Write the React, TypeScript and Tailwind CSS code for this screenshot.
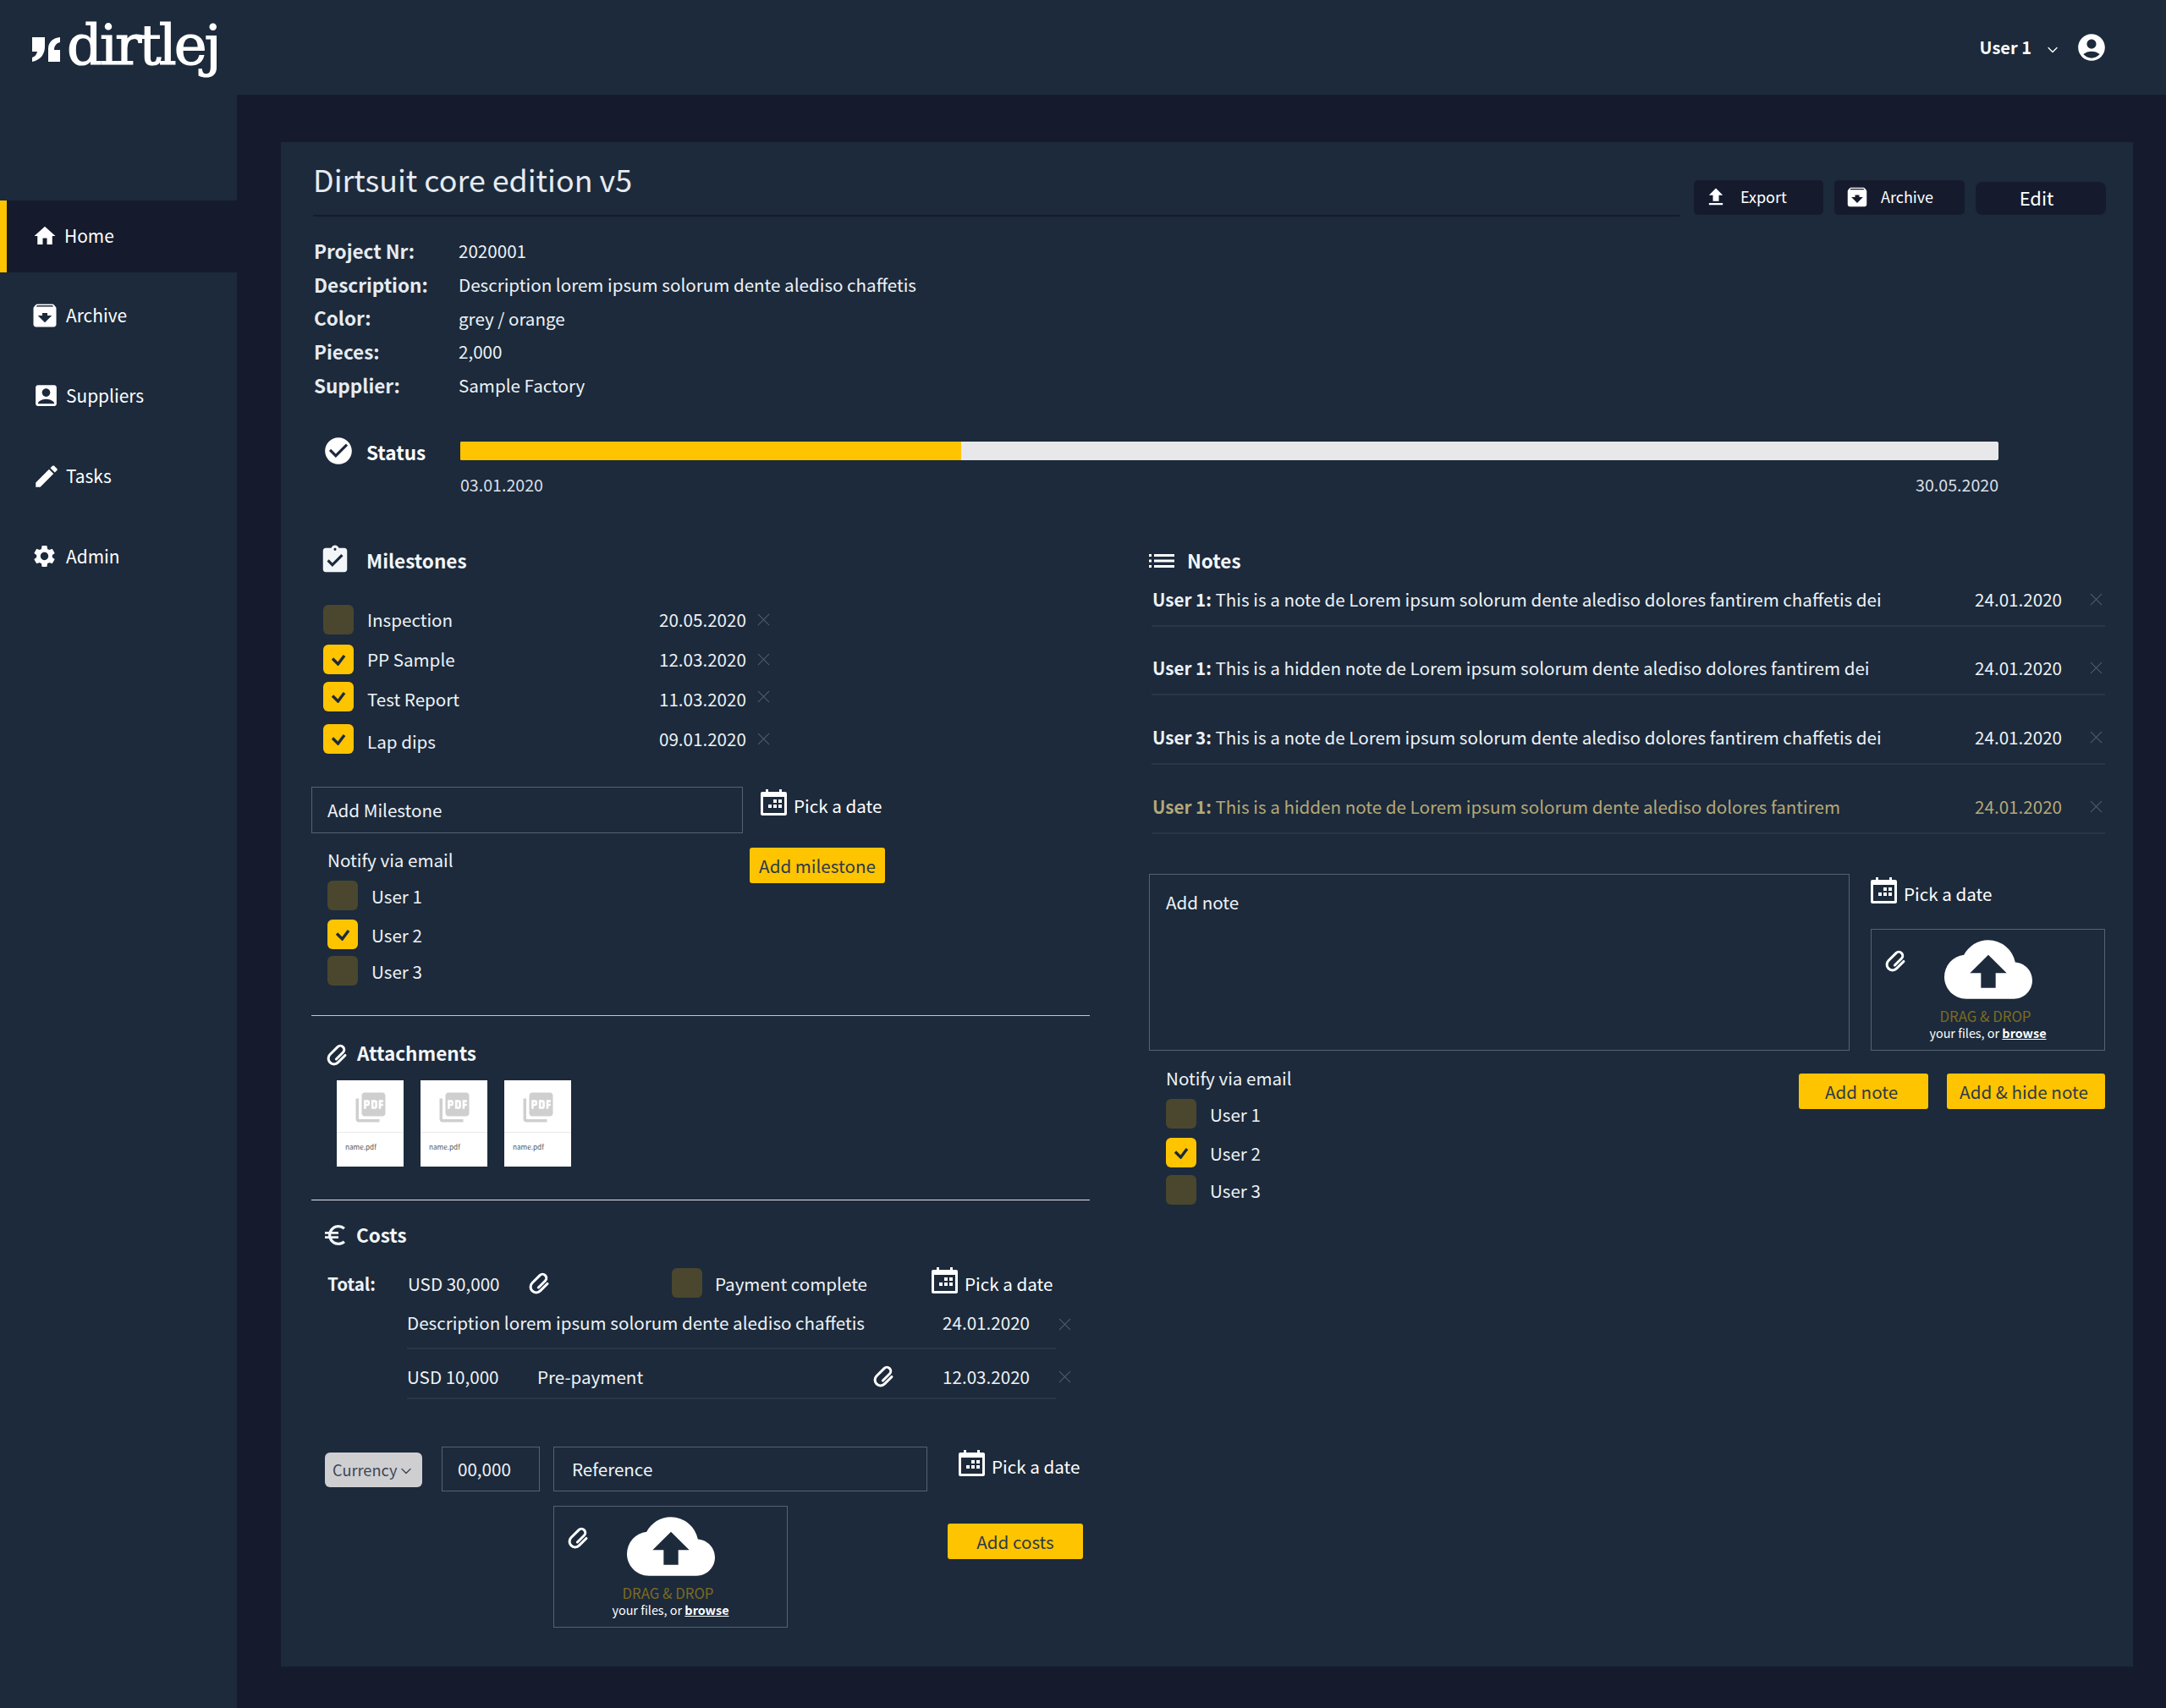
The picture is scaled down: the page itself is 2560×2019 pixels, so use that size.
import type { ReactNode } from "react";
import {
  MdAccountBox,
  MdAccountCircle,
  MdArchive,
  MdAssignmentTurnedIn,
  MdCheckCircle,
  MdCloudUpload,
  MdEdit,
  MdEuroSymbol,
  MdFileUpload,
  MdHome,
  MdPictureAsPdf,
  MdSettings,
} from "react-icons/md";
import { ChevronDown, X } from "lucide-react";

function Clip({ size = 32 }: { size?: number }) {
  return (
    <svg width={size} height={size} viewBox="0 0 24 24" className="shrink-0">
      <path
        d="M17 7.5v9a5 5 0 0 1-10 0V7a3.4 3.4 0 0 1 6.8 0v8.5"
        fill="none"
        stroke="#fff"
        strokeWidth="2.3"
        strokeLinecap="round"
        transform="rotate(45 12 12)"
      />
    </svg>
  );
}

function CalendarIcon() {
  return (
    <svg width="31" height="31" viewBox="0 0 31 31" className="shrink-0">
      <path fill="#fff" d="M6 0h3v3h13V0h3v3h4a2 2 0 0 1 2 2v24a2 2 0 0 1-2 2H2a2 2 0 0 1-2-2V5a2 2 0 0 1 2-2h4z" />
      <rect x="3" y="9" width="25" height="19" fill="#1c2a3b" />
      <path fill="#fff" d="M15 12h4v4h-4zM21 12h4v4h-4zM9 18h4v4H9zM15 18h4v4h-4zM21 18h4v4h-4z" />
    </svg>
  );
}

function PickDate({ className = "" }: { className?: string }) {
  return (
    <div className={`flex items-start gap-2 h-[31px] text-[20.6px] leading-[31px] text-white ${className}`}>
      <CalendarIcon />
      <span className="pt-[4px] whitespace-nowrap">Pick a date</span>
    </div>
  );
}

function Checkbox({ on = false }: { on?: boolean }) {
  return (
    <span
      className={`w-[36px] h-[35px] rounded-[6px] flex items-center justify-center shrink-0 ${
        on ? "bg-[#ffc400]" : "bg-[#4a472e]"
      }`}
    >
      {on && (
        <svg width="18" height="14" viewBox="0 0 18 14">
          <path d="M2 5.5l6.5 6.5L16 2" fill="none" stroke="#1c2a3b" strokeWidth="3.4" />
        </svg>
      )}
    </span>
  );
}

function Close() {
  return <X size={25} strokeWidth={1} className="text-[#5a6574] shrink-0" />;
}

function Heading({ icon, children, className = "" }: { icon: ReactNode; children: ReactNode; className?: string }) {
  return (
    <div className={`flex items-center text-[22.5px] font-semibold leading-[40px] text-[#f3f6f9] ${className}`}>
      {icon}
      {children}
    </div>
  );
}

function Dropzone({ className = "" }: { className?: string }) {
  return (
    <div className={`w-[277px] h-[144px] border border-[#566272] relative flex flex-col items-center ${className}`}>
      <span className="absolute left-[13px] top-[21px]">
        <Clip />
      </span>
      <MdCloudUpload size={104} className="text-white -mt-[5px] -mb-[8px] shrink-0" />
      <span className="text-[16.8px] leading-[22px] text-[#7c6a22] -ml-[6px]">DRAG &amp; DROP</span>
      <span className="text-[14.4px] leading-[18px] text-white">
        your files, or <b className="underline">browse</b>
      </span>
    </div>
  );
}

function NotifyList({ gaps }: { gaps: string[] }) {
  return (
    <div>
      {["User 1", "User 2", "User 3"].map((u, i) => (
        <div key={u} className={`flex items-center h-[35px] text-[20.6px] leading-[26px] text-[#eef2f6] ${gaps[i]}`}>
          <Checkbox on={i === 1} />
          <span className="ml-[16px] pt-[1px]">{u}</span>
        </div>
      ))}
    </div>
  );
}

const nav = [
  { label: "Home", icon: <MdHome size={30} />, active: true },
  { label: "Archive", icon: <MdArchive size={36} className="-ml-[3px] -mr-[2px]" /> },
  { label: "Suppliers", icon: <MdAccountBox size={33} /> },
  { label: "Tasks", icon: <MdEdit size={34} /> },
  { label: "Admin", icon: <MdSettings size={31} className="ml-[-1px]" /> },
];

const info = [
  ["Project Nr:", "2020001"],
  ["Description:", "Description lorem ipsum solorum dente alediso chaffetis"],
  ["Color:", "grey / orange"],
  ["Pieces:", "2,000"],
  ["Supplier:", "Sample Factory"],
];

const milestones = [
  { label: "Inspection", date: "20.05.2020", on: false, cls: "" },
  { label: "PP Sample", date: "12.03.2020", on: true, cls: "mt-[12px]" },
  { label: "Test Report", date: "11.03.2020", on: true, cls: "mt-[9px]" },
  { label: "Lap dips", date: "09.01.2020", on: true, cls: "mt-[15px]" },
];

const notes = [
  { user: "User 1:", text: "This is a note de Lorem ipsum solorum dente alediso dolores fantirem chaffetis dei", cls: "h-[56px]" },
  { user: "User 1:", text: "This is a hidden note de Lorem ipsum solorum dente alediso dolores fantirem dei", cls: "h-[81px]" },
  { user: "User 3:", text: "This is a note de Lorem ipsum solorum dente alediso dolores fantirem chaffetis dei", cls: "h-[82px]" },
  { user: "User 1:", text: "This is a hidden note de Lorem ipsum solorum dente alediso dolores fantirem", cls: "h-[82px] text-[#b5a878]" },
];

export default function App() {
  return (
    <div className="w-[2560px] h-[2019px] flex flex-col bg-[#151b2d] text-[#eef2f6] font-['Noto_Sans_CJK_SC','Noto_Sans',sans-serif]">
      {/* Header */}
      <header className="h-[112px] shrink-0 bg-[#1c2a3b] flex items-start justify-between pr-[69px]">
        <div className="flex items-start pl-[38px] text-white">
          <svg width="34" height="30" viewBox="0 0 34 30" className="mt-[44px]">
            <path fill="#fff" d="M0 0h15v11c0 9-5 16-15 18v-5c3-1 5-3 6-7H0zM33 0c-8 1-14 5-14 14v15h14V15h-7c0-4 2-8 7-9z" />
          </svg>
          <span className="ml-[7px] mt-[13px] font-['DejaVu_Serif',serif] text-[65.6px] leading-[80px] tracking-[-3px] [-webkit-text-stroke:1.2px_white]">
            dirtlej
          </span>
        </div>
        <div className="flex items-center h-[112px] text-white">
          <span className="text-[20px] font-semibold">User 1</span>
          <ChevronDown size={20} strokeWidth={1.6} className="ml-[15px] mt-[6px]" />
          <MdAccountCircle size={38} className="ml-[17px]" />
        </div>
      </header>

      <div className="flex flex-1">
        {/* Sidebar */}
        <aside className="w-[280px] shrink-0 bg-[#1c2a3b] pt-[125px]">
          {nav.map((n) => (
            <div
              key={n.label}
              className={`flex items-center text-[20.9px] text-white ${
                n.active ? "h-[85px] bg-[#151b2d] border-l-[8px] border-[#ffc400] pl-[30px] pb-[1px]" : "h-[95px] pl-[38px] pt-[6px]"
              }`}
            >
              <span className={`flex justify-start ${n.active ? "w-[38px]" : "w-[40px]"}`}>{n.icon}</span>
              <span>{n.label}</span>
            </div>
          ))}
        </aside>

        {/* Card */}
        <main className="flex-1 pl-[52px] pr-[40px] pt-[56px]">
          <div className="h-[1802px] bg-[#1c2a3b]">
            <div className="flex items-end pl-[38px] pr-[32px] h-[88px]">
              <div className="w-[1615px] h-[88px] border-b-2 border-[#151b2d] text-[35.8px] leading-[56px] pt-[15px] text-[#e6ebf1]">
                Dirtsuit core edition v5
              </div>
              <div className="flex items-end gap-[13px] ml-[17px] mb-[2px]">
                <button className="w-[153px] h-[41px] rounded-[5px] bg-[#151b2d] text-[18px] text-white flex items-center pl-[12px] pb-[2px]">
                  <MdFileUpload size={28} />
                  <span className="ml-[15px]">Export</span>
                </button>
                <button className="w-[154px] h-[41px] rounded-[5px] bg-[#151b2d] text-[18px] text-white flex items-center pl-[12px] pb-[2px]">
                  <MdArchive size={30} />
                  <span className="ml-[13px]">Archive</span>
                </button>
                <button className="w-[154px] h-[39px] rounded-[8px] bg-[#151b2d] text-[22px] leading-[26px] text-white pr-[10px] pb-[4px]">Edit</button>
              </div>
            </div>

            <div className="pl-[39px] pt-[21px]">
              {info.map(([k, v]) => (
                <div key={k} className="flex items-center h-[39.7px]">
                  <span className="w-[171px] text-[22.5px] font-semibold text-[#e6ebf1]">{k}</span>
                  <span className="text-[20.6px] text-[#eef2f6]">{v}</span>
                </div>
              ))}
            </div>

            {/* Status */}
            <div className="flex mt-[47px] pl-[52px]">
              <div className="w-[160px] flex items-center h-[22px] text-[22.5px] font-semibold text-white">
                <MdCheckCircle size={38} className="shrink-0 -ml-[3px]" />
                <span className="ml-[14px] pt-[3px]">Status</span>
              </div>
              <div className="w-[1818px]">
                <div className="h-[22px] bg-[#e8e8ea] rounded-[2px]">
                  <div className="h-full w-[592px] bg-[#ffc400] rounded-l-[2px]" />
                </div>
                <div className="flex justify-between text-[19.6px] leading-[30px] mt-[14px] text-[#d9dfe6]">
                  <span>03.01.2020</span>
                  <span>30.05.2020</span>
                </div>
              </div>
            </div>

            <div className="flex pl-[36px] gap-[70px] mt-[51px]">
              {/* Left column */}
              <div className="w-[920px]">
                <Heading className="h-[46px] pl-[9px]" icon={<MdAssignmentTurnedIn size={38} className="mr-[18px]" />}>
                  Milestones
                </Heading>

                <div className="mt-[30px] pl-[14px]">
                  {milestones.map((m, i) => (
                    <div key={m.label} className={`flex items-center h-[35px] text-[20.6px] leading-[26px] ${m.cls}`}>
                      <Checkbox on={m.on} />
                      <span className={`ml-[16px] w-[345px] ${i > 1 ? "pt-[4px]" : "pb-[2px]"}`}>{m.label}</span>
                      <span className={`w-[100px] text-right whitespace-nowrap ${i === 2 ? "pt-[4px]" : "pb-[2px]"}`}>{m.date}</span>
                      <span className="ml-[11px] flex">
                        <Close />
                      </span>
                    </div>
                  ))}
                </div>

                <div className="flex mt-[39px]">
                  <div className="w-[510px] h-[55px] border border-[#566272] flex items-center pl-[18px] text-[20.6px]">Add Milestone</div>
                  <PickDate className="ml-[21px] mt-[3px]" />
                </div>

                <div className="flex">
                  <div className="w-[518px] pl-[19px] pt-[10px]">
                    <div className="h-[42px] text-[20.6px] leading-[42px]">Notify via email</div>
                    <NotifyList gaps={["mt-[4px]", "mt-[11px]", "mt-[8px]"]} />
                  </div>
                  <button className="w-[160px] h-[42px] mt-[17px] rounded-[3px] bg-[#ffc400] text-[20.6px] text-[#2e3a4a]">Add milestone</button>
                </div>

                <div className="h-px bg-[#c3c9d1] mt-[35px]" />

                <Heading className="mt-[23px] pl-[15px]" icon={<span className="mr-[7px] mt-[5px] flex"><Clip /></span>}>
                  Attachments
                </Heading>

                <div className="flex gap-[20px] mt-[13px] ml-[30px]">
                  {[0, 1, 2].map((t) => (
                    <div key={t} className="w-[79px] h-[102px] bg-white">
                      <div className="h-[62px] border-b border-[#e9e9e9] flex items-center justify-center pt-[3px]">
                        <MdPictureAsPdf size={42} className="text-[#cfcfcf]" />
                      </div>
                      <div className="pl-[10px] pt-[7px] text-[8.2px] leading-[18px] text-[#555]">name.pdf</div>
                    </div>
                  ))}
                </div>

                <div className="h-px bg-[#dfe3e8] mt-[39px]" />

                <Heading className="mt-[20px] pl-[12px]" icon={<MdEuroSymbol size={32} className="mr-[9px] mt-[2px]" />}>
                  Costs
                </Heading>

                <div className="flex items-center h-[37px] mt-[19px] pl-[19px] text-[20.6px] leading-[26px]">
                  <span className="w-[95px] font-semibold">Total:</span>
                  <span className="w-[140px]">USD 30,000</span>
                  <span className="w-[172px] flex"><Clip /></span>
                  <Checkbox />
                  <span className="ml-[15px] w-[256px]">Payment complete</span>
                  <PickDate className="self-start" />
                </div>

                <div className="flex ml-[113px] text-[20.6px] leading-[26px]">
                  <div className="w-[767px] h-[60px] border-b-2 border-[#27374a] flex items-center pb-[3px]">
                    <span className="flex-1 whitespace-nowrap">Description lorem ipsum solorum dente alediso chaffetis</span>
                    <span className="mr-[31px]">24.01.2020</span>
                  </div>
                  <span className="h-[60px] flex items-center -ml-[2px]"><Close /></span>
                </div>
                <div className="flex ml-[113px] text-[20.6px] leading-[26px]">
                  <div className="w-[767px] h-[59px] border-b-2 border-[#27374a] flex items-center pt-[6px]">
                    <span className="w-[154px]">USD 10,000</span>
                    <span className="flex-1">Pre-payment</span>
                    <span className="flex"><Clip /></span>
                    <span className="ml-[53px] mr-[31px]">12.03.2020</span>
                  </div>
                  <span className="h-[59px] flex items-center pt-[6px] -ml-[2px]"><Close /></span>
                </div>

                <div className="flex mt-[56px]">
                  <div className="w-[115px] h-[41px] mt-[7px] ml-[16px] rounded-[6px] bg-[#cfcfd2] text-[#3d4754] text-[18.2px] flex items-center pl-[9px]">
                    Currency
                    <ChevronDown size={20} strokeWidth={1.6} className="ml-[1px] mt-[3px]" />
                  </div>
                  <div className="w-[116px] h-[53px] ml-[23px] border border-[#566272] flex items-center pl-[18px] text-[20.6px]">00,000</div>
                  <div className="w-[442px] h-[53px] ml-[16px] border border-[#566272] flex items-center pl-[21px] text-[20.6px]">Reference</div>
                  <PickDate className="ml-[37px] mt-[4px]" />
                </div>

                <div className="flex mt-[17px]">
                  <Dropzone className="ml-[286px]" />
                  <button className="w-[160px] h-[42px] mt-[21px] ml-[189px] rounded-[3px] bg-[#ffc400] text-[20.6px] text-[#2e3a4a]">Add costs</button>
                </div>
              </div>

              {/* Right column */}
              <div className="w-[1130px]">
                <Heading
                  className="h-[46px]"
                  icon={
                    <svg width="30" height="16" viewBox="0 0 30 16" className="mr-[15px] mt-[2px]">
                      <path fill="#fff" d="M0 0h3v3H0zM6 0h24v3H6zM0 6.5h3v3H0zM6 6.5h24v3H6zM0 13h3v3H0zM6 13h24v3H6z" />
                    </svg>
                  }
                >
                  Notes
                </Heading>

                <div className="ml-[3px]">
                  {notes.map((n, i) => (
                    <div key={i} className={`flex items-end pb-[17px] pl-[1px] border-b-2 border-[#27374a] ${n.cls}`}>
                      <div className="flex items-center w-full h-[28px] text-[20.6px] leading-[28px]">
                        <span className="flex-1 whitespace-nowrap">
                          <b className="font-semibold">{n.user}</b> {n.text}
                        </span>
                        <span className="mr-[28px]">24.01.2020</span>
                        <span className="flex -mr-[2px]"><Close /></span>
                      </div>
                    </div>
                  ))}
                </div>

                <div className="flex mt-[47px]">
                  <div className="w-[828px] h-[209px] border border-[#566272] pl-[19px] pt-[17px] text-[20.6px] leading-[30px]">Add note</div>
                  <div className="ml-[25px]">
                    <PickDate className="mt-[4px]" />
                    <Dropzone className="mt-[30px]" />
                  </div>
                </div>

                <div className="flex justify-between">
                  <div className="pl-[20px] pt-[12px]">
                    <div className="h-[40px] text-[20.6px] leading-[40px]">Notify via email</div>
                    <NotifyList gaps={["mt-[5px]", "mt-[11px]", "mt-[9px]"]} />
                  </div>
                  <div className="flex gap-[22px] mt-[27px]">
                    <button className="w-[153px] h-[42px] rounded-[3px] bg-[#ffc400] text-[20.6px] text-[#2e3a4a] pr-[5px]">Add note</button>
                    <button className="w-[187px] h-[42px] rounded-[3px] bg-[#ffc400] text-[20.6px] text-[#2e3a4a] pr-[5px]">Add &amp; hide note</button>
                  </div>
                </div>
              </div>
            </div>
          </div>
        </main>
      </div>
    </div>
  );
}
